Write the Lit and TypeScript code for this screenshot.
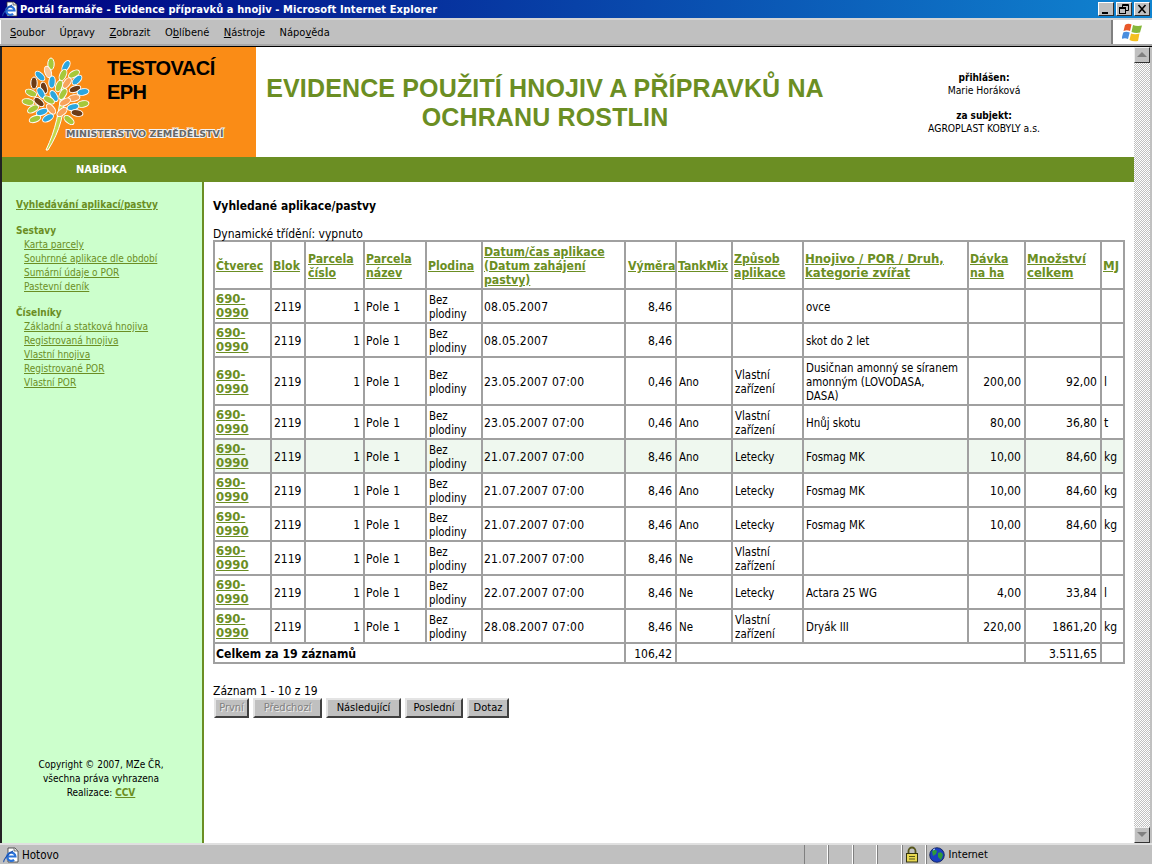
import { LitElement, html, css, svg } from "lit";
import { customElement } from "lit/decorators.js";

const D = "690-0990";
const rows: { h: number; hl?: boolean; tall?: boolean; c: string[] }[] = [
  { h: 34, c: ["08.05.2007", "8,46", "", "", "ovce", "", "", ""] },
  { h: 34, c: ["08.05.2007", "8,46", "", "", "skot do 2 let", "", "", ""] },
  { h: 48, tall: true, c: ["23.05.2007 07:00", "0,46", "Ano", "Vlastní zařízení", "Dusičnan amonný se síranem\namonným (LOVODASA,\nDASA)", "200,00", "92,00", "l"] },
  { h: 34, c: ["23.05.2007 07:00", "0,46", "Ano", "Vlastní zařízení", "Hnůj skotu", "80,00", "36,80", "t"] },
  { h: 34, hl: true, c: ["21.07.2007 07:00", "8,46", "Ano", "Letecky", "Fosmag MK", "10,00", "84,60", "kg"] },
  { h: 34, c: ["21.07.2007 07:00", "8,46", "Ano", "Letecky", "Fosmag MK", "10,00", "84,60", "kg"] },
  { h: 34, c: ["21.07.2007 07:00", "8,46", "Ano", "Letecky", "Fosmag MK", "10,00", "84,60", "kg"] },
  { h: 34, c: ["21.07.2007 07:00", "8,46", "Ne", "Vlastní zařízení", "", "", "", ""] },
  { h: 34, c: ["22.07.2007 07:00", "8,46", "Ne", "Letecky", "Actara 25 WG", "4,00", "33,84", "l"] },
  { h: 34, c: ["28.08.2007 07:00", "8,46", "Ne", "Vlastní zařízení", "Dryák III", "220,00", "1861,20", "kg"] },
];
const widths = [57, 34, 59, 62, 56, 143, 51, 56, 71, 165, 57, 76, 23];
const heads: [string, string][] = [
  ["Čtverec", "n"], ["Blok", "n"], ["Parcela číslo", "n p"], ["Parcela název", "n"], ["Plodina", "n"],
  ["Datum/čas aplikace (Datum zahájení pastvy)", "n"], ["Výměra", "n p"], ["TankMix", "n"], ["Způsob aplikace", "n"],
  ["Hnojivo / POR / Druh, kategorie zvířat", "w"], ["Dávka na ha", "n"], ["Množství celkem", "w"], ["MJ", "w"],
];

const G = "#a6c83a", B = "#2ba6de", O = "#f7a35c", N = "#6b3a16";
const leaves: [number, number, number, string][] = [
  [51, 16, 0, G], [66, 18, 30, B], [40, 28, -45, B], [48, 24, -20, "#fbc79a"], [52, 34, 5, B], [63, 27, 25, G], [74, 26, 60, G],
  [34, 35, 0, N], [44, 40, -15, N], [77, 32, 45, B], [67, 35, 35, O], [59, 38, 20, G], [31, 45, -65, G], [41, 45, -30, B],
  [75, 41, 70, N], [83, 44, 80, B], [54, 48, -30, B], [63, 46, 30, G], [74, 50, 80, O], [49, 52, -60, G], [65, 54, 60, O],
  [39, 54, -50, N], [28, 54, -80, G], [83, 56, 80, G], [73, 59, 75, B], [33, 61, 60, G], [51, 61, -40, O], [42, 64, 70, B],
  [62, 64, 50, O], [77, 65, 100, N], [48, 70, 60, B], [35, 71, 70, G], [69, 72, -50, G],
];

@customElement("app-root")
export class AppRoot extends LitElement {
  static styles = css`
    :host { display: block; width: 1152px; height: 864px; overflow: hidden; background: #c0c0c0; color: #000; font-family: "DejaVu Sans Condensed", "DejaVu Sans", sans-serif; font-stretch: condensed; font-size: 12px; }
    * { box-sizing: border-box; }
    .win { display: flex; flex-direction: column; height: 864px; }
    .title { height: 18px; flex: none; display: flex; align-items: center; background: linear-gradient(90deg, #000080 0%, #1084d0 100%); color: #fff; font-weight: bold; font-size: 11px; letter-spacing: 0.09px; padding-left: 2px; gap: 2px; }
    .title .t { flex: 1; white-space: nowrap; }
    .wbtns { display: flex; gap: 2px; padding-right: 2px; }
    .wbtn { width: 16px; height: 14px; background: #c0c0c0; border: 1px solid; border-color: #fff #303030 #303030 #fff; display: block; }
    .wbtn svg { display: block; }
    .menubar { height: 28px; flex: none; display: flex; align-items: stretch; background: #c0c0c0; border-top: 2px solid #d4d4d4; border-bottom: 2px solid #a8a8a8; }
    .menus { flex: 1; display: flex; align-items: center; padding-left: 9px; gap: 14.5px; font-size: 11px; border-left: 1px solid #fff; }
    .flag { width: 41px; background: #fff; border-left: 2px solid #808080; display: flex; align-items: center; justify-content: center; }
    .view { flex: 1; min-height: 0; display: flex; border-top: 1px solid #000; }
    .page { flex: 1; min-width: 0; display: flex; flex-direction: column; background: #fff; border-left: 2px solid #222; }
    .head { height: 110px; flex: none; display: flex; }
    .brand { width: 254px; flex: none; background: #fa8c16; position: relative; display: flex; }
    .brand svg { position: absolute; left: 0; top: 0; }
    .brand .test { margin: 9px 0 0 105px; font: bold 20px/24px "Liberation Sans", sans-serif; letter-spacing: -0.55px; }
    .brand .min { position: absolute; left: 64px; top: 81px; font: bold 9.5px/12px "DejaVu Sans", sans-serif; color: #666; letter-spacing: 0; -webkit-text-stroke: 2px #f4f4f4; paint-order: stroke fill; white-space: nowrap; }
    h1 { width: 578px; margin: 0; flex: none; display: flex; align-items: center; justify-content: center; text-align: center; color: #6b8e23; font: bold 25px/29px "Liberation Sans", sans-serif; letter-spacing: 0.15px; padding: 2px 5px 0; }
    .user { flex: 1; text-align: center; font-size: 10.3px; line-height: 12px; padding-top: 25px; }
    .user b { display: block; font-size: 10px; }
    .user p { margin: 0 0 14px; }
    .nav { height: 25px; flex: none; background: #6b8e23; color: #fff; font-weight: bold; font-size: 11px; line-height: 26px; padding-left: 74px; }
    .body { flex: 1; min-height: 0; display: flex; }
    .side { width: 202px; flex: none; background: #ccffcc; border-right: 2px solid #6b8e23; display: flex; flex-direction: column; justify-content: space-between; font-size: 10px; line-height: 14px; padding: 16px 0 43px 14px; }
    .side a { color: #6b8e23; text-decoration: underline; display: block; }
    .side a.top, .side .sec { font-weight: bold; }
    .side .sec { color: #6b8e23; margin-top: 12px; }
    .side a.sub { padding-left: 8px; }
    .side .foot { text-align: center; padding-right: 16px; }
    .side .foot a { display: inline; font-weight: bold; }
    .main { flex: 1; min-width: 0; padding: 17px 0 0 9px; }
    h2 { margin: 0; font-size: 12px; line-height: 14px; font-weight: bold; }
    .dyn { margin-top: 14px; line-height: 14px; height: 13px; }
    table { border-collapse: separate; border-spacing: 0; table-layout: fixed; width: 912px; border: 1px solid #a0a0a0; font-size: 12px; line-height: 14px; }
    td, th { border: 1px solid #a0a0a0; padding: 2px 2px 0; text-align: left; font-weight: normal; vertical-align: middle; }
    th { padding-left: 1px; }
    th.p { padding-left: 2px; }
    th a, td a { color: #6b8e23; font-weight: bold; text-decoration: underline; font-size: 13px; }
    th.n a { font-size: 12.2px; }
    td:first-child { padding: 0 2px 0 1px; }
    tr.tall td:first-child { padding-top: 2px; }
    tr.tot td:first-child { padding-top: 2px; }
    td.t { font-size: 11.4px; white-space: pre-line; }
    td.pole { padding-left: 1px; letter-spacing: 0.3px; }
    td.dt { padding-left: 1px; letter-spacing: 0.25px; }
    td.r { text-align: right; padding-right: 3px; }
    tr.hl td { background: #eff8ef; }
    td.lbl { font-weight: bold; font-size: 12.2px; }
    .pg { margin-top: 20px; line-height: 14px; }
    .btns { display: flex; gap: 4px; padding-left: 1px; }
    .btn { height: 20px; font: 11px/16px "DejaVu Sans Condensed", "DejaVu Sans", sans-serif; font-stretch: condensed; background: #c0c0c0; padding: 0; color: #000; border: 2px solid; border-color: #e4e4e4 #404040 #404040 #e4e4e4; }
    .btn.off { color: #808080; text-shadow: 1px 1px 0 #eee; }
    .sb { width: 18px; flex: none; background-color: #c0c0c0; display: flex; flex-direction: column; justify-content: space-between; padding-right: 2px; }
    .track { flex: 1; background: conic-gradient(#fff 25%, #c0c0c0 0 50%, #fff 0 75%, #c0c0c0 0) 0 0 / 2px 2px; }
    .sbtn { height: 16px; background: #c0c0c0; border: 1px solid; border-color: #eee #333 #333 #eee; display: flex; align-items: center; justify-content: center; }
    .status { height: 21px; flex: none; display: flex; align-items: center; border-top: 2px solid #e0e0e0; font-size: 11.5px; background: #c0c0c0; }
    .status .hot { width: 804px; flex: none; display: flex; align-items: center; gap: 3px; padding-left: 3px; }
    .cell { height: 19px; width: 24.4px; flex: none; border-left: 1px solid #808080; border-right: 1px solid #fff; }
    .cell.lock { width: 24px; display: flex; align-items: center; justify-content: center; padding-right: 3px; }
    .inet { display: flex; align-items: center; gap: 4px; padding-left: 2px; border-left: 1px solid #808080; height: 19px; font-size: 11px; }
  `;

  ie() {
    return html`<svg width="16" height="16" viewBox="0 0 16 16"><path d="M5 1h7l3 3v11H5z" fill="#fff" stroke="#333" stroke-width=".8"/><path d="M11 1v3h4" fill="#ddd" stroke="#333" stroke-width=".6"/><path d="M5 9.5h7.5a4.2 4.2 0 1 0-1.4 3.4" fill="none" stroke="#2a72d8" stroke-width="2.2"/><path d="M1 15c-1-1 3-8 9-11" fill="none" stroke="#1c4ea8" stroke-width="1.2"/></svg>`;
  }

  render() {
    return html`<div class="win">
      <div class="title">
        ${this.ie()}
        <span class="t">Portál farmáře - Evidence přípravků a hnojiv - Microsoft Internet Explorer</span>
        <span class="wbtns">
          <span class="wbtn"><svg width="14" height="12"><rect x="3" y="9" width="6" height="2" fill="#000"/></svg></span>
          <span class="wbtn"><svg width="14" height="12"><path d="M5.5 4V1.5h6v6H9M5 2.5h7" fill="none" stroke="#000"/><rect x="2.5" y="4.5" width="6" height="6" fill="#c0c0c0" stroke="#000"/><path d="M2 5.5h7" stroke="#000"/></svg></span>
          <span class="wbtn"><svg width="14" height="12"><path d="M3.5 2l7 8M10.5 2l-7 8" stroke="#000" stroke-width="1.6"/></svg></span>
        </span>
      </div>
      <div class="menubar">
        <div class="menus">
          <span><u>S</u>oubor</span><span>Úp<u>r</u>avy</span><span><u>Z</u>obrazit</span><span>O<u>b</u>líbené</span><span><u>N</u>ástroje</span><span>Nápo<u>v</u>ěda</span>
        </div>
        <div class="flag"><svg width="21" height="19" viewBox="0 0 21 19"><path d="M3 2q3-2 6.500-.5L8 8Q5 6.500 1.500 8z" fill="#e8582a"/><path d="M11 2q4 1.500 9 .5l-2 7q-4 1-8.500-.5z" fill="#86b83a"/><path d="M1.200 9.500q3-1.500 6.500 0L6 16q-3-1.500-6.500 0z" fill="#4a8ede"/><path d="M9 10.500q4 1.500 8.500 0L16 18q-5 1-8.500-1z" fill="#f4c020"/></svg></div>
      </div>
      <div class="view">
        <div class="page">
          <div class="head">
            <div class="brand">
              <svg width="110" height="110" viewBox="0 0 110 110">
                <path d="M44 103C54 82 57 65 60 38L63 38C63 66 58 84 46 103Z" fill="#c4d84a" stroke="#fff" stroke-width="1"/>
                ${leaves.map(([x, y, a, c]) => svg`<ellipse cx=${x - 2} cy=${y + 1} rx="3.2" ry="6" fill=${c} stroke="#fff" stroke-width="1" transform="rotate(${a} ${x - 2} ${y + 1})"/>`)}
              </svg>
              <div class="test">TESTOVACÍ<br />EPH</div>
              <div class="min">MINISTERSTVO ZEMĚDĚLSTVÍ</div>
            </div>
            <h1>EVIDENCE POUŽITÍ HNOJIV A PŘÍPRAVKŮ NA OCHRANU ROSTLIN</h1>
            <div class="user">
              <p><b>přihlášen:</b>Marie Horáková</p>
              <p><b>za subjekt:</b>AGROPLAST KOBYLY a.s.</p>
            </div>
          </div>
          <div class="nav">NABÍDKA</div>
          <div class="body">
            <div class="side">
              <div>
                <a class="top">Vyhledávání aplikací/pastvy</a>
                <div class="sec">Sestavy</div>
                <a class="sub">Karta parcely</a><a class="sub">Souhrnné aplikace dle období</a><a class="sub">Sumární údaje o POR</a><a class="sub">Pastevní deník</a>
                <div class="sec">Číselníky</div>
                <a class="sub">Základní a statková hnojiva</a><a class="sub">Registrovaná hnojiva</a><a class="sub">Vlastní hnojiva</a><a class="sub">Registrované POR</a><a class="sub">Vlastní POR</a>
              </div>
              <div class="foot">Copyright © 2007, MZe ČR,<br />všechna práva vyhrazena<br />Realizace: <a>CCV</a></div>
            </div>
            <div class="main">
              <h2>Vyhledané aplikace/pastvy</h2>
              <div class="dyn">Dynamické třídění: vypnuto</div>
              <table>
                <colgroup>${widths.map((w) => html`<col style="width:${w}px" />`)}</colgroup>
                <tr style="height:48px">${heads.map(([h, k]) => html`<th class=${k}><a>${h}</a></th>`)}</tr>
                ${rows.map((r) => html`<tr class="${r.hl ? "hl" : ""} ${r.tall ? "tall" : ""}" style="height:${r.h}px">
                  <td><a>${D.slice(0, 4)}<br />${D.slice(4)}</a></td><td>2119</td><td class="r">1</td><td class="pole">Pole 1</td><td class="t">Bez plodiny</td>
                  <td class="dt">${r.c[0]}</td><td class="r">${r.c[1]}</td><td class="t">${r.c[2]}</td><td class="t">${r.c[3]}</td><td class="t">${r.c[4]}</td><td class="r">${r.c[5]}</td><td class="r">${r.c[6]}</td><td>${r.c[7]}</td>
                </tr>`)}
                <tr class="tot" style="height:20px"><td class="lbl" colspan="6">Celkem za 19 záznamů</td><td class="r">106,42</td><td colspan="4"></td><td class="r">3.511,65</td><td></td></tr>
              </table>
              <div class="pg">Záznam 1 - 10 z 19</div>
              <div class="btns">
                <button class="btn off" style="width:35px">První</button><button class="btn off" style="width:69px">Předchozí</button><button class="btn" style="width:75px">Následující</button><button class="btn" style="width:58px">Poslední</button><button class="btn" style="width:42px">Dotaz</button>
              </div>
            </div>
          </div>
        </div>
        <div class="sb">
          <div class="sbtn"><svg width="10" height="6"><path d="M5 0l5 5H0z" fill="#808080"/></svg></div>
          <div class="track"></div>
          <div class="sbtn"><svg width="10" height="6"><path d="M5 5L10 0H0z" fill="#808080"/></svg></div>
        </div>
      </div>
      <div class="status">
        <div class="hot">${this.ie()}<span>Hotovo</span></div>
        <span class="cell"></span><span class="cell"></span><span class="cell"></span><span class="cell"></span>
        <span class="cell lock"><svg width="14" height="17" viewBox="0 0 14 17"><path d="M3.500 8V5a3.500 3.500 0 0 1 7 0v3" fill="none" stroke="#55551a" stroke-width="1.800"/><rect x="1.500" y="7.500" width="11" height="8.500" fill="#e8d850" stroke="#333310"/><path d="M4 10.500h6M4 13h6" stroke="#55551a"/></svg></span>
        <div class="inet"><svg width="16" height="16" viewBox="0 0 16 16"><circle cx="8" cy="8" r="7.300" fill="#1a3fc0" stroke="#0a1a50" stroke-width=".8"/><path d="M3 4q3-2 5 0l-1 3-3 2zM9 6q4-2 5 2l-2 5-3-3z" fill="#2f9a3a"/><path d="M4 3l2-1" stroke="#bfe0ff"/></svg><span>Internet</span></div>
      </div>
    </div>`;
  }
}
